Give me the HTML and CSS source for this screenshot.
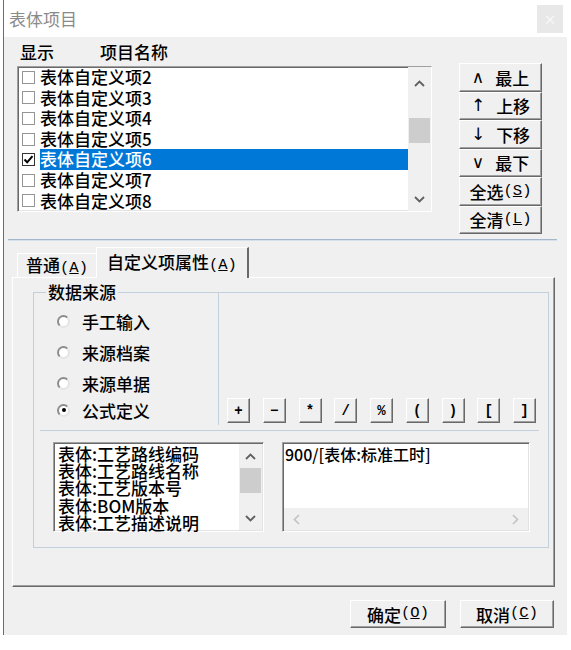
FILE: index.html
```html
<!DOCTYPE html>
<html lang="zh-CN">
<head>
  <meta charset="UTF-8">
  <title>表体项目</title>
  <link rel="stylesheet" href="styles.css">
</head>
<body>
  <div class="window">
    <div class="titlebar">
      <span class="title">表体项目</span>
      <span class="close">×</span>
    </div>
    <div class="client">
      <div class="top">
        <div class="items">
          <div class="items-head">
            <span class="col-show">显示</span>
            <span>项目名称</span>
          </div>
          <div class="listbox">
            <div class="rows">
              <div class="row"><span class="chk"></span><span class="name">表体自定义项2</span></div>
              <div class="row"><span class="chk"></span><span class="name">表体自定义项3</span></div>
              <div class="row"><span class="chk"></span><span class="name">表体自定义项4</span></div>
              <div class="row"><span class="chk"></span><span class="name">表体自定义项5</span></div>
              <div class="row selected">
                <span class="chk checked"><svg width="11" height="11" viewBox="0 0 11 11"><path d="M1.5 5.5 L4.2 8.3 L9.5 2.2" fill="none" stroke="#000" stroke-width="2"/></svg></span>
                <span class="name">表体自定义项6</span>
              </div>
              <div class="row"><span class="chk"></span><span class="name">表体自定义项7</span></div>
              <div class="row"><span class="chk"></span><span class="name">表体自定义项8</span></div>
            </div>
            <div class="vscroll big">
              <div class="sb-up"><svg width="11" height="7" viewBox="0 0 11 7"><polyline points="1,6 5.5,1.5 10,6" fill="none" stroke="#606060" stroke-width="1.8"/></svg></div>
              <div class="sb-track"><div class="sb-thumb"></div></div>
              <div class="sb-down"><svg width="11" height="7" viewBox="0 0 11 7"><polyline points="1,1 5.5,5.5 10,1" fill="none" stroke="#606060" stroke-width="1.8"/></svg></div>
            </div>
          </div>
        </div>
        <div class="side-btns">
          <button class="btn"><span class="arr">∧</span>最上</button>
          <button class="btn"><span class="arr">↑</span>上移</button>
          <button class="btn"><span class="arr">↓</span>下移</button>
          <button class="btn"><span class="arr">∨</span>最下</button>
          <button class="btn">全选<span class="key">(<u>S</u>)</span></button>
          <button class="btn">全清<span class="key">(<u>L</u>)</span></button>
        </div>
      </div>

      <div class="separator"></div>

      <div class="tabs">
        <div class="tab">普通<span class="key">(<u>A</u>)</span></div>
        <div class="tab active">自定义项属性<span class="key">(<u>A</u>)</span></div>
      </div>

      <div class="panel">
        <div class="group">
          <span class="group-title">数据来源</span>
          <div class="upper">
            <div class="radios">
              <div class="radio-row"><span class="radio"></span>手工输入</div>
              <div class="radio-row"><span class="radio"></span>来源档案</div>
              <div class="radio-row"><span class="radio"></span>来源单据</div>
              <div class="radio-row last"><span class="radio on"></span>公式定义</div>
            </div>
            <div class="ops">
              <button class="btn op">+</button>
              <button class="btn op">−</button>
              <button class="btn op">*</button>
              <button class="btn op">/</button>
              <button class="btn op">%</button>
              <button class="btn op">(</button>
              <button class="btn op">)</button>
              <button class="btn op">[</button>
              <button class="btn op">]</button>
            </div>
          </div>
          <div class="hr"></div>
          <div class="lower">
            <div class="fields">
              <div class="lines">
                <div>表体:工艺路线编码</div>
                <div>表体:工艺路线名称</div>
                <div>表体:工艺版本号</div>
                <div>表体:BOM版本</div>
                <div>表体:工艺描述说明</div>
              </div>
              <div class="vscroll small">
                <div class="sb-up"><svg width="11" height="7" viewBox="0 0 11 7"><polyline points="1,6 5.5,1.5 10,6" fill="none" stroke="#606060" stroke-width="1.8"/></svg></div>
                <div class="sb-track"><div class="sb-thumb"></div></div>
                <div class="sb-down"><svg width="11" height="7" viewBox="0 0 11 7"><polyline points="1,1 5.5,5.5 10,1" fill="none" stroke="#606060" stroke-width="1.8"/></svg></div>
              </div>
            </div>
            <div class="formula">
              <div class="formula-text">900/[表体:标准工时]</div>
              <div class="hscroll">
                <svg width="7" height="11" viewBox="0 0 7 11"><polyline points="6,1 1.5,5.5 6,10" fill="none" stroke="#c2c2c2" stroke-width="1.6"/></svg>
                <svg width="7" height="11" viewBox="0 0 7 11"><polyline points="1,1 5.5,5.5 1,10" fill="none" stroke="#c2c2c2" stroke-width="1.6"/></svg>
              </div>
            </div>
          </div>
        </div>
      </div>

      <div class="footer">
        <button class="btn wide ok">确定<span class="key">(<u>O</u>)</span></button>
        <button class="btn wide">取消<span class="key">(<u>C</u>)</span></button>
      </div>
    </div>
  </div>
</body>
</html>
```

FILE: styles.css
```css
* {
  box-sizing: border-box;
}
body {
  margin: 0;
  background: #fff;
  font-family: "Noto Sans CJK SC", "Noto Sans", sans-serif;
  font-size: 17px;
  font-weight: 500;
  color: #000;
}
.window {
  margin-left: 3px;
  width: 564px;
  border-left: 1px solid #6b6b6b;
}
.titlebar {
  height: 37px;
  background: #fff;
  display: flex;
  align-items: center;
  justify-content: space-between;
  padding: 0 4px 0 5px;
}
.title {
  color: #8a8a8a;
  font-size: 17px;
  font-weight: 400;
}
.close {
  width: 26px;
  height: 28px;
  background: #e8e8e8;
  color: #fafafa;
  font-size: 13px;
  display: flex;
  align-items: center;
  justify-content: center;
}
.client {
  background: #f0f0f0;
  height: 598px;
  padding-top: 5px;
}

/* item list */
.top {
  display: flex;
  margin-left: 13px;
}
.items {
  width: 415px;
}
.items-head {
  height: 20px;
  line-height: 20px;
  padding-left: 3px;
  margin-bottom: 4px;
  display: flex;
}
.col-show {
  width: 80px;
}
.listbox {
  height: 146px;
  display: flex;
  background: #fff;
  border: 1px solid;
  border-color: #a0a0a0 #fff #fff #a0a0a0;
  box-shadow: inset 1px 1px 0 #696969, inset -1px -1px 0 #e3e3e3;
}
.rows {
  flex: 1;
}
.row {
  height: 20.6px;
  display: flex;
  align-items: center;
  padding-left: 4px;
}
.chk {
  width: 13px;
  height: 13px;
  border: 1px solid #959595;
  background: #fff;
  margin-right: 5px;
  display: flex;
  align-items: center;
  justify-content: center;
}
.chk.checked {
  border-color: #333;
}
.name {
  flex: 1;
  height: 100%;
  line-height: 20.6px;
  white-space: nowrap;
}
.selected .name {
  background: #0078d7;
  color: #fff;
}

/* scrollbars */
.vscroll {
  width: 23px;
  background: #f0f0f0;
  display: flex;
  flex-direction: column;
}
.sb-up,
.sb-down {
  display: flex;
  align-items: center;
  justify-content: center;
}
.sb-track {
  flex: 1;
}
.sb-thumb {
  background: #cdcdcd;
  margin: 0 1px;
  height: 25px;
}
.big .sb-up {
  height: 32px;
}
.big .sb-down {
  height: 24px;
}
.big .sb-thumb {
  margin-top: 19px;
}
.small .sb-up,
.small .sb-down {
  height: 24px;
}

/* buttons */
.btn {
  font: inherit;
  color: #000;
  background: #f0f0f0;
  border: 1px solid;
  border-color: #fff #696969 #696969 #fff;
  box-shadow: inset -1px -1px 0 #a0a0a0;
  padding: 0;
  display: flex;
  align-items: center;
  justify-content: center;
  line-height: 1;
}
.side-btns {
  margin-left: 27px;
  margin-top: 21px;
  width: 83px;
  display: flex;
  flex-direction: column;
}
.side-btns .btn {
  height: 28.5px;
}
.arr {
  font-family: "DejaVu Sans", sans-serif;
  font-weight: 400;
  font-size: 17px;
  margin-right: 11px;
}
.key {
  font-family: "Liberation Mono", monospace;
  font-weight: 400;
  font-size: 15.5px;
}

.separator {
  margin: 5px 10px 0 4px;
  height: 2px;
  border-top: 1px solid #a3b8cc;
  border-bottom: 1px solid #d6e0ea;
}

/* tabs */
.tabs {
  display: flex;
  align-items: flex-end;
  margin: 6px 0 0 13px;
  height: 31px;
  position: relative;
  z-index: 1;
}
.tab {
  height: 25px;
  line-height: 22px;
  padding: 0 8px;
  border-top: 1px solid #fff;
  border-left: 1px solid #fff;
}
.tab.active {
  height: 31px;
  line-height: 28px;
  padding: 0 10px;
  border-right: 2px solid #696969;
  background: #f0f0f0;
}
.panel {
  margin: -1px 0 0 8px;
  width: 543px;
  height: 310px;
  border: 1px solid;
  border-color: #fff #696969 #696969 #fff;
  box-shadow: inset -1px -1px 0 #a0a0a0;
  padding: 14px 5px 0 20px;
}

/* data source group */
.group {
  position: relative;
  height: 256px;
  border: 1px solid #c2cfdc;
}
.group-title {
  position: absolute;
  top: -11px;
  left: 12px;
  padding: 0 2px;
  line-height: 20px;
  background: #f0f0f0;
}
.upper {
  display: flex;
  height: 132px;
}
.radios {
  width: 184px;
  padding: 16px 0 0 23px;
}
.radio-row {
  height: 24px;
  display: flex;
  align-items: center;
  margin-bottom: 7px;
}
.radio-row.last {
  margin-top: -4px;
}
.radio {
  width: 13px;
  height: 13px;
  border-radius: 50%;
  border: 2px solid;
  border-color: #8c8c8c #e4e4e4 #e4e4e4 #8c8c8c;
  background: #fff;
  margin-right: 12px;
  display: flex;
  align-items: center;
  justify-content: center;
}
.radio.on::after {
  content: "";
  width: 4px;
  height: 4px;
  border-radius: 50%;
  background: #000;
}
.ops {
  flex: 1;
  border-left: 1px solid #c2cfdc;
  display: flex;
  align-items: flex-end;
  padding: 0 0 2px 8px;
  gap: 12.75px;
}
.op {
  width: 23px;
  height: 25px;
  font-family: "Liberation Mono", monospace;
  font-weight: bold;
  font-size: 14px;
}
.hr {
  height: 1px;
  background: #c2cfdc;
  margin: 5px 9px 0 6px;
}
.lower {
  display: flex;
  margin: 11px 0 0 19px;
  gap: 18px;
  height: 90px;
}
.fields,
.formula {
  height: 90px;
  background: #fff;
  border: 1px solid;
  border-color: #a0a0a0 #fff #fff #a0a0a0;
  box-shadow: inset 1px 1px 0 #696969, inset -1px -1px 0 #e3e3e3;
  padding: 1px;
}
.fields {
  width: 211px;
  display: flex;
}
.lines {
  flex: 1;
  padding: 1px 0 0 3px;
  line-height: 17.2px;
  white-space: nowrap;
}
.formula {
  width: 248px;
  display: flex;
  flex-direction: column;
}
.formula-text {
  flex: 1;
  font-size: 16px;
  line-height: 20px;
  padding-left: 1px;
}
.hscroll {
  height: 22px;
  background: #f0f0f0;
  display: flex;
  align-items: center;
  justify-content: space-between;
  padding: 0 9px;
}

/* dialog buttons */
.footer {
  display: flex;
  justify-content: flex-end;
  gap: 14px;
  margin-top: 13px;
  padding-right: 13px;
}
.wide {
  width: 94px;
  height: 28px;
}
.wide.ok {
  width: 96px;
}
```
